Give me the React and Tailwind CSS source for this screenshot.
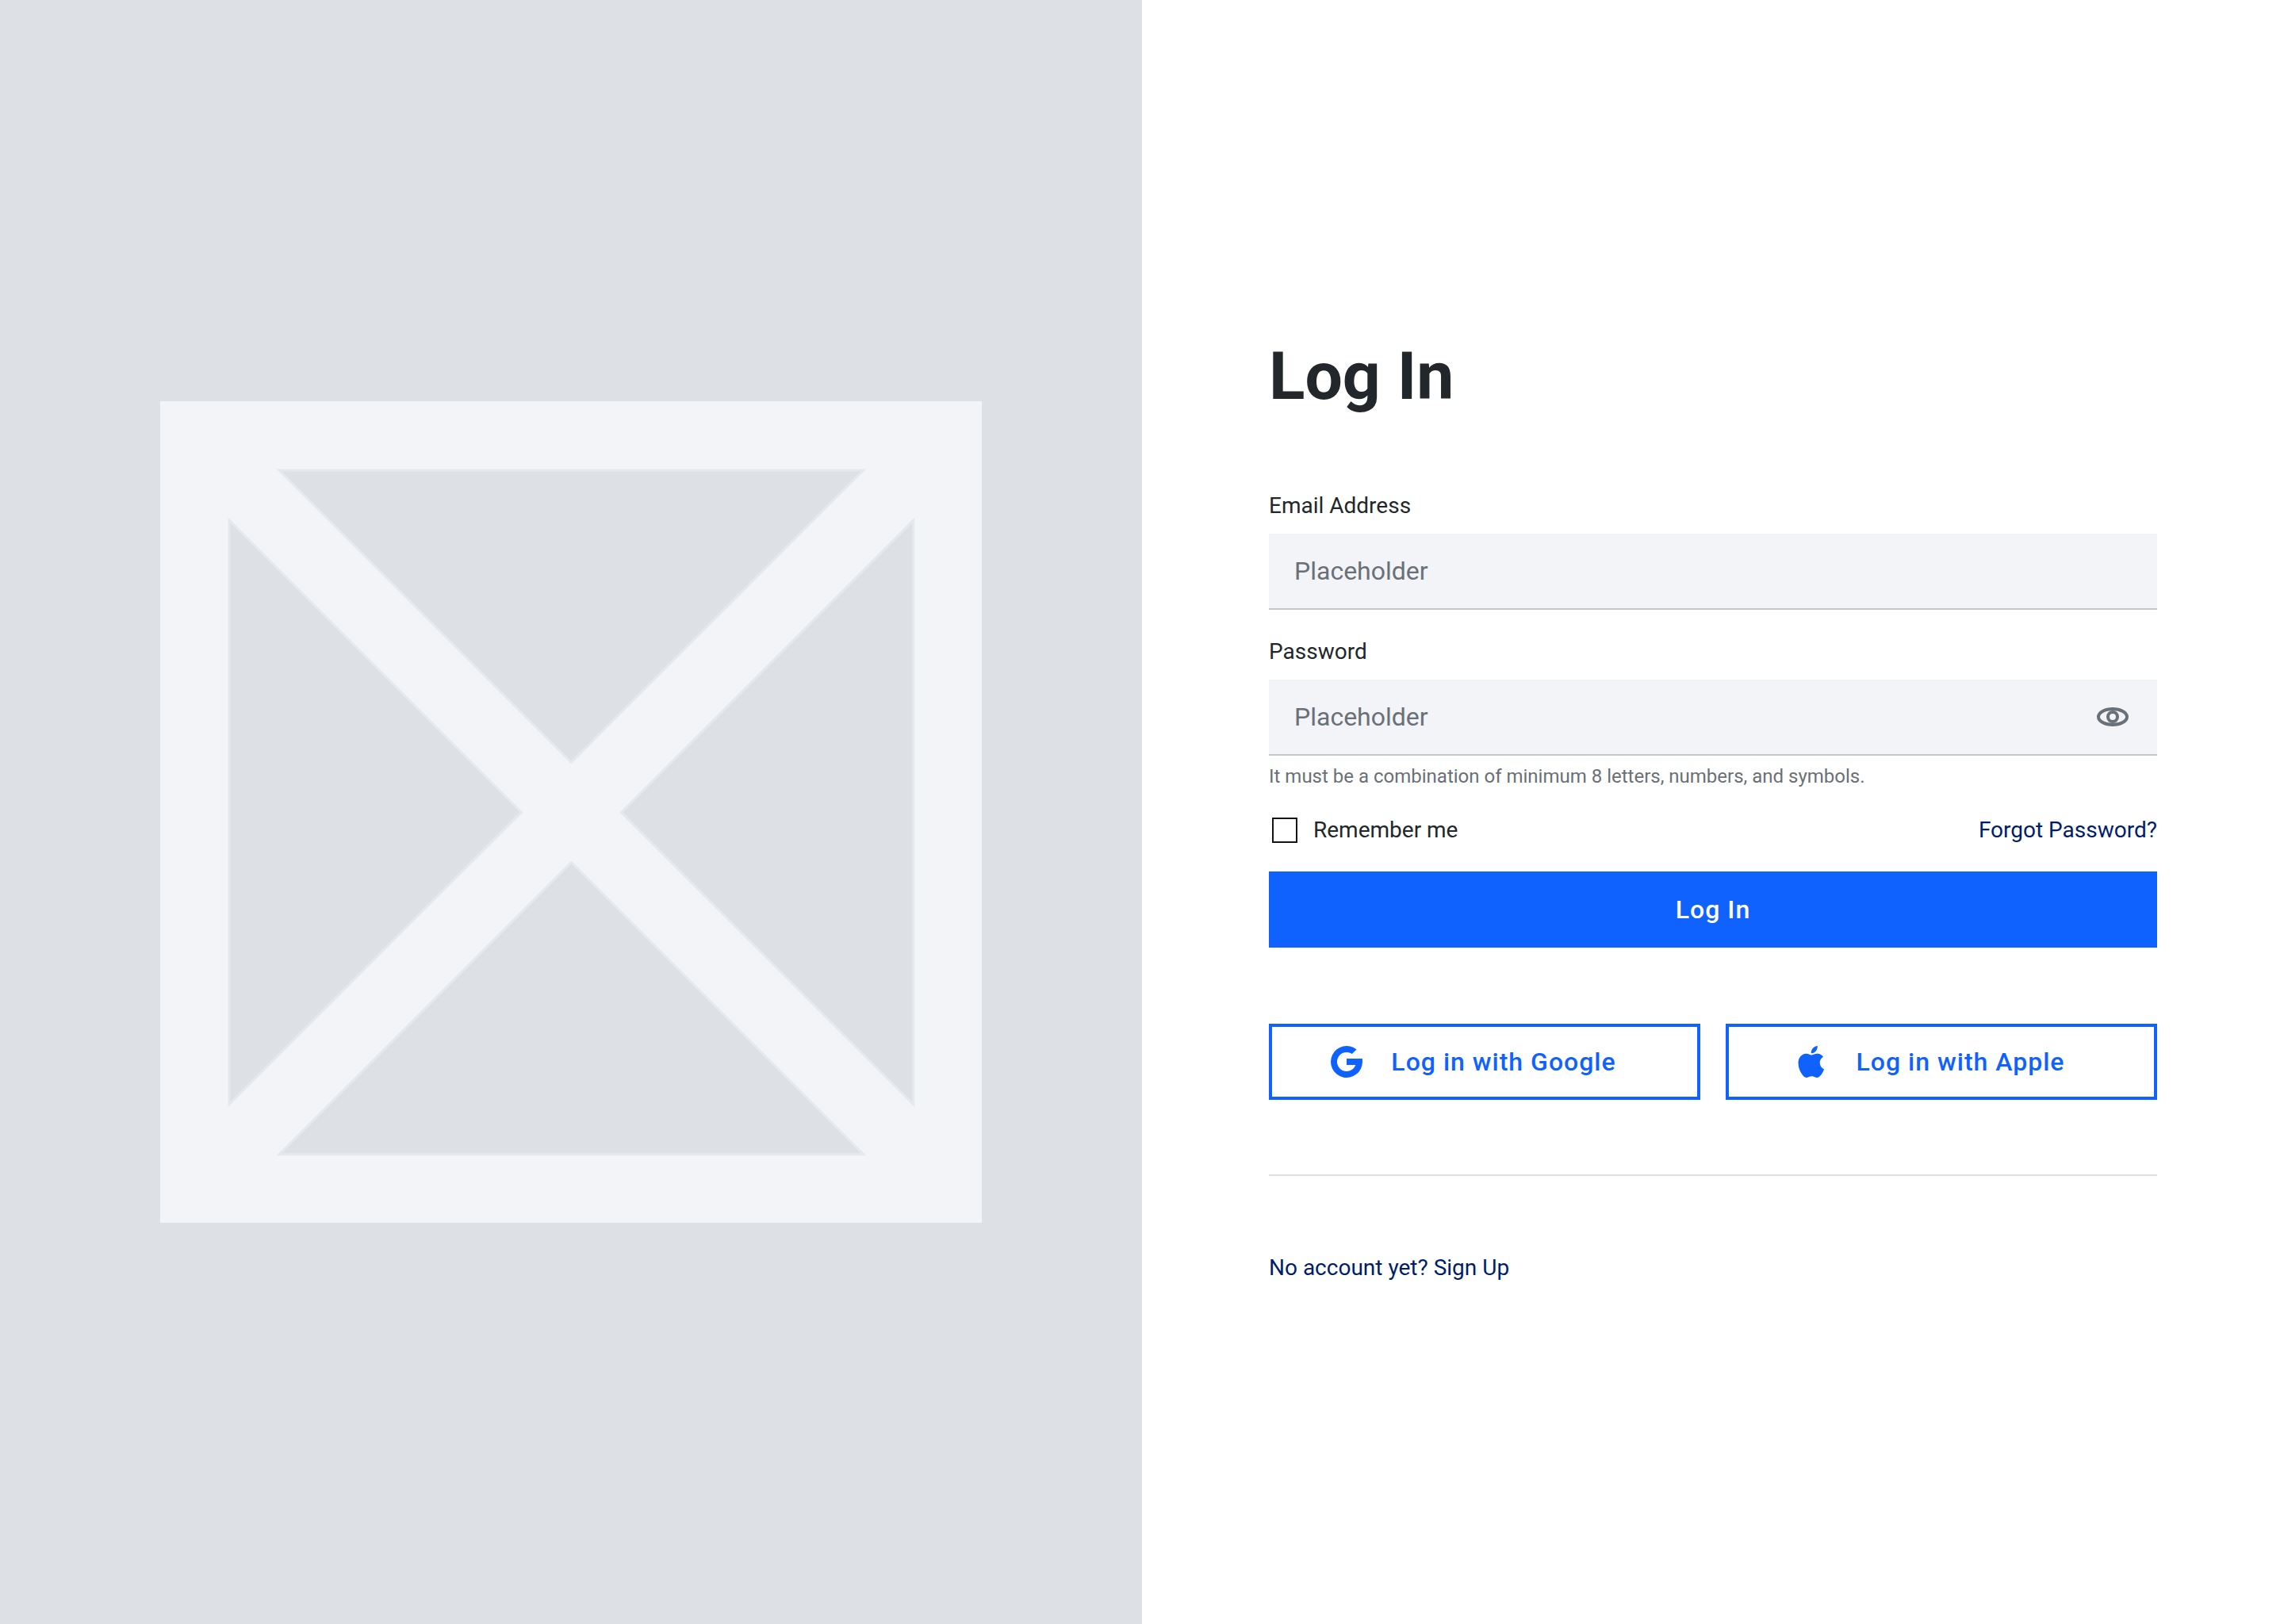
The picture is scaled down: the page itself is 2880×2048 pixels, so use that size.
import { useState } from "react";

function PlaceholderImage() {
  return (
    <svg
      viewBox="0 0 1036 1036"
      role="img"
      aria-label="Image placeholder"
      className="aspect-square w-[72%]"
    >
      <rect width="1036" height="1036" fill="#f2f4f8" />
      <g fill="#dde1e6" stroke="#e5e8ec" strokeWidth="3">
        <path d="M150 87H886L518 455Z" />
        <path d="M150 949H886L518 581Z" />
        <path d="M87 150V886L455 518Z" />
        <path d="M949 150V886L581 518Z" />
      </g>
    </svg>
  );
}

function EyeIcon() {
  return (
    <svg viewBox="0 0 24 24" fill="none" stroke="currentColor" strokeWidth="2" className="size-12" aria-hidden="true">
      <ellipse cx="12" cy="12" rx="9" ry="5" />
      <circle cx="12" cy="12" r="3" />
    </svg>
  );
}

function GoogleIcon() {
  return (
    <svg viewBox="0 0 24 24" fill="currentColor" className="size-12" aria-hidden="true">
      <path d="M12 10v4h5.66A6 6 0 1 1 15.4 7.05L18.3 4.2A10 10 0 1 0 22 12L21.9 10Z" />
    </svg>
  );
}

function AppleIcon() {
  return (
    <svg viewBox="0 0 24 24" fill="currentColor" className="size-12" aria-hidden="true">
      <path
        transform="translate(1.4 2) scale(0.8333)"
        d="M12.152 6.896c-.948 0-2.415-1.078-3.96-1.04-2.04.027-3.91 1.183-4.961 3.014-2.117 3.675-.546 9.103 1.519 12.09 1.013 1.454 2.208 3.09 3.792 3.039 1.52-.065 2.09-.987 3.935-.987 1.831 0 2.35.987 3.96.948 1.637-.026 2.676-1.48 3.676-2.948 1.156-1.688 1.636-3.325 1.662-3.415-.039-.013-3.182-1.221-3.22-4.857-.026-3.04 2.48-4.494 2.597-4.559-1.429-2.09-3.623-2.324-4.39-2.376-2-.156-3.675 1.09-4.61 1.09zM15.53 3.83c.843-1.012 1.4-2.427 1.245-3.83-1.207.052-2.662.805-3.532 1.818-.78.896-1.454 2.338-1.273 3.714 1.338.104 2.715-.688 3.559-1.701"
      />
    </svg>
  );
}

function Field({ id, label, type, children }) {
  return (
    <div className="flex flex-col">
      <label htmlFor={id} className="mb-[14px] text-[28px] leading-[42px]">
        {label}
      </label>
      <div className="flex h-24 items-center gap-4 border-b-2 border-[#c1c7cd] bg-[#f2f4f8] px-8">
        <input
          id={id}
          type={type}
          placeholder="Placeholder"
          className="h-full min-w-0 flex-1 bg-transparent text-[32px] outline-none placeholder:text-[#697077]"
        />
        {children}
      </div>
    </div>
  );
}

function SocialButton({ icon, children }) {
  return (
    <button
      type="button"
      className="flex h-24 flex-1 items-center justify-center border-4 border-[#0f62fe] text-[32px] font-medium tracking-[1px] text-[#0f62fe]"
    >
      {icon}
      <span className="px-8">{children}</span>
    </button>
  );
}

export default function App() {
  const [visible, setVisible] = useState(false);

  return (
    <div className="flex min-h-screen bg-white font-['Roboto',sans-serif] text-[#21272a]">
      <aside className="flex w-1/2 items-center justify-center bg-[#dde1e6]">
        <PlaceholderImage />
      </aside>

      <main className="flex w-1/2 flex-col justify-center px-40">
        <h1 className="mb-24 text-[84px] leading-[92px] font-bold">Log In</h1>

        <form className="flex flex-col gap-8" onSubmit={(e) => e.preventDefault()}>
          <Field id="email" label="Email Address" type="email" />
          <div>
            <Field id="password" label="Password" type={visible ? "text" : "password"}>
              <button
                type="button"
                aria-label="Show password"
                onClick={() => setVisible(!visible)}
                className="text-[#697077]"
              >
                <EyeIcon />
              </button>
            </Field>
            <p className="mt-[10px] text-[24px] leading-8 text-[#697077]">
              It must be a combination of minimum 8 letters, numbers, and symbols.
            </p>
          </div>
          <div className="flex items-center justify-between text-[28px] leading-10">
            <label className="flex items-center gap-4">
              <input
                type="checkbox"
                className="m-1 size-8 appearance-none border-2 border-[#121619] checked:bg-[#121619]"
              />
              Remember me
            </label>
            <a href="#forgot" className="text-[#001d6c]">
              Forgot Password?
            </a>
          </div>
          <button
            type="submit"
            className="h-24 bg-[#0f62fe] text-[32px] font-medium tracking-[1px] text-white"
          >
            Log In
          </button>
        </form>

        <div className="mt-24 flex gap-8">
          <SocialButton icon={<GoogleIcon />}>Log in with Google</SocialButton>
          <SocialButton icon={<AppleIcon />}>Log in with Apple</SocialButton>
        </div>

        <hr className="mt-[94px] mb-24 border-t-2 border-[#dde1e6]" />

        <a href="#signup" className="self-start text-[28px] leading-10 text-[#001d6c]">
          No account yet? Sign Up
        </a>
      </main>
    </div>
  );
}
